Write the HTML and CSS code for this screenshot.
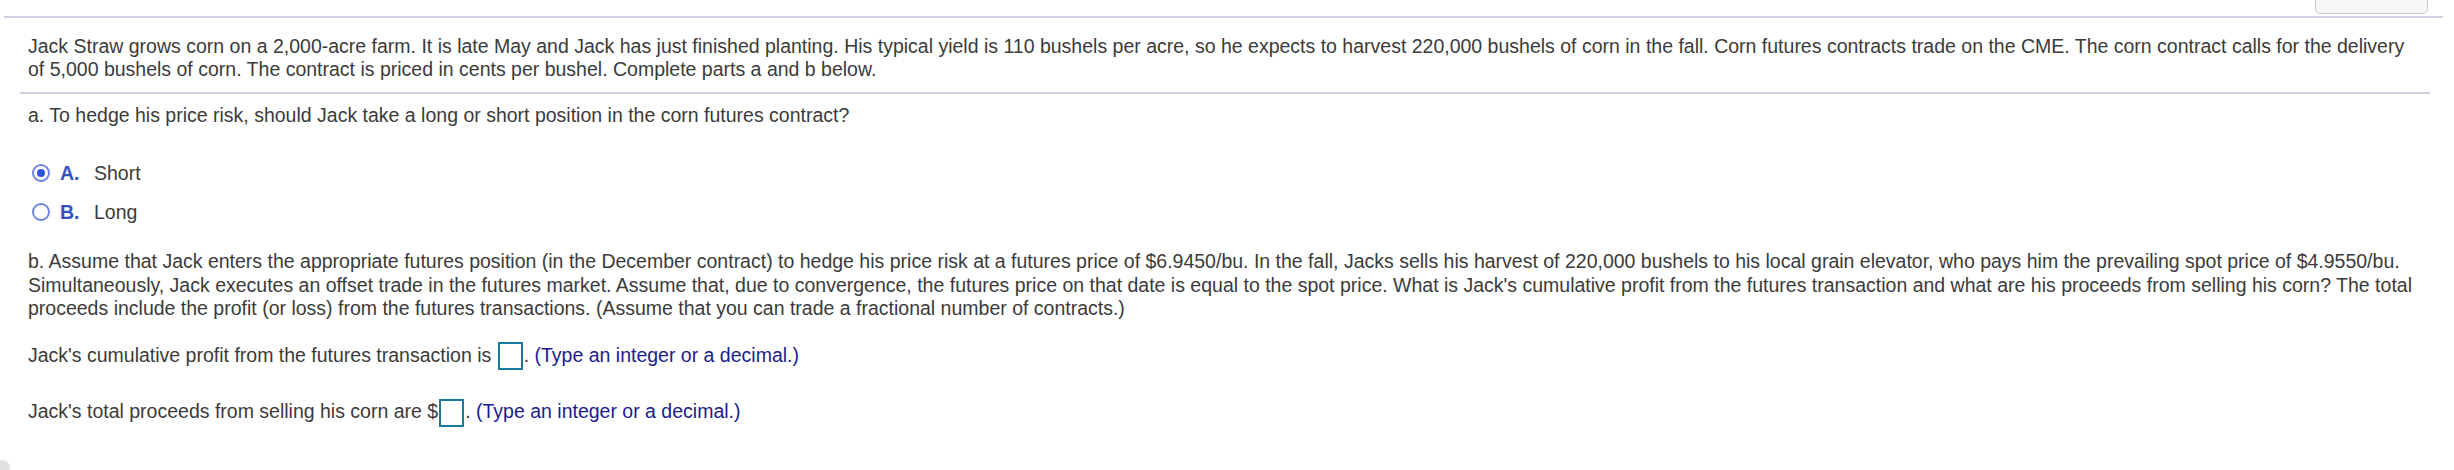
FILE: index.html
```html
<!DOCTYPE html>
<html>
<head>
<meta charset="utf-8">
<link rel="stylesheet" href="styles.css">
</head>
<body>
<div class="page">
  <div class="topbar"><div class="topbtn"></div></div>
  <div class="rule-top"></div>
  <div class="stem">Jack Straw grows corn on a 2,000-acre farm. It is late May and Jack has just finished planting. His typical yield is 110 bushels per acre, so he expects to harvest 220,000 bushels of corn in the fall. Corn futures contracts trade on the CME. The corn contract calls for the delivery of 5,000 bushels of corn. The contract is priced in cents per bushel. Complete parts a and b below.</div>
  <div class="rule-mid"></div>
  <div class="body">
    <p class="q">a. To hedge his price risk, should Jack take a long or short position in the corn futures contract?</p>
    <div class="options">
      <div class="opt"><span class="radio checked"></span><span class="letter">A.</span><span class="otext">Short</span></div>
      <div class="opt"><span class="radio"></span><span class="letter">B.</span><span class="otext">Long</span></div>
    </div>
    <p class="partb">b. Assume that Jack enters the appropriate futures position (in the December contract) to hedge his price risk at a futures price of $6.9450/bu. In the fall, Jacks sells his harvest of 220,000 bushels to his local grain elevator, who pays him the prevailing spot price of $4.9550/bu. Simultaneously, Jack executes an offset trade in the futures market. Assume that, due to convergence, the futures price on that date is equal to the spot price. What is Jack's cumulative profit from the futures transaction and what are his proceeds from selling his corn? The total proceeds include the profit (or loss) from the futures transactions. (Assume that you can trade a fractional number of contracts.)</p>
    <p class="ans ans1">Jack's cumulative profit from the futures transaction is <span class="box"></span>. <span class="hint">(Type an integer or a decimal.)</span></p>
    <p class="ans ans2">Jack's total proceeds from selling his corn are $<span class="box"></span>. <span class="hint">(Type an integer or a decimal.)</span></p>
  </div>
  <div class="corner"></div>
</div>
</body>
</html>
```
FILE: styles.css
```css
html, body {
  margin: 0;
  padding: 0;
  background: #ffffff;
}
.page {
  position: relative;
  width: 2454px;
  height: 470px;
  overflow: hidden;
  font-family: "Liberation Sans", Arial, Helvetica, sans-serif;
  font-size: 19.5px;
  color: #3b3b3b;
}
.topbar {
  height: 16px;
  display: flex;
  justify-content: flex-end;
  padding-right: 26px;
  overflow: hidden;
}
.topbtn {
  width: 111px;
  height: 30px;
  margin-top: -18px;
  border: 1px solid #c8c8c8;
  border-radius: 5px;
  background: #f6f6f6;
}
.rule-top {
  height: 2px;
  background: #cdd0e1;
  margin: 0 11px 0 4px;
}
.stem {
  padding: 17px 40px 12px 28px;
  line-height: 22.5px;
}
.rule-mid {
  height: 2px;
  background: #cdd0e1;
  margin: 0 24px 0 20px;
}
.body {
  padding: 0 24px 0 28px;
}
.q {
  margin: 10px 0 0 0;
  line-height: 22px;
}
.options {
  margin-top: 36px;
  display: flex;
  flex-direction: column;
  gap: 17px;
}
.opt {
  display: flex;
  align-items: center;
  height: 22px;
}
.radio {
  width: 14px;
  height: 14px;
  border: 2px solid #6f86dc;
  border-radius: 50%;
  box-sizing: content-box;
  display: inline-flex;
  align-items: center;
  justify-content: center;
  margin-left: 4px;
  margin-right: 10px;
  background: #fff;
}
.radio.checked::after {
  content: "";
  width: 8px;
  height: 8px;
  border-radius: 50%;
  background: #2f56d6;
}
.letter {
  color: #3650c0;
  font-weight: bold;
  width: 34px;
}
.otext {
  color: #3b3b3b;
}
.partb {
  margin: 27px 0 0 0;
  line-height: 23.5px;
}
.ans {
  margin: 0;
  line-height: 28px;
}
.ans1 {
  margin-top: 20px;
}
.ans2 {
  margin-top: 27px;
}
.box {
  display: inline-block;
  width: 21px;
  height: 24px;
  border: 2px solid #157c9c;
  vertical-align: middle;
  margin: 0 1px;
}
.hint {
  color: #1c1c8c;
}
.corner {
  position: absolute;
  left: -6px;
  bottom: -6px;
  width: 16px;
  height: 16px;
  border-radius: 50%;
  background: #e2e2e2;
}
```
